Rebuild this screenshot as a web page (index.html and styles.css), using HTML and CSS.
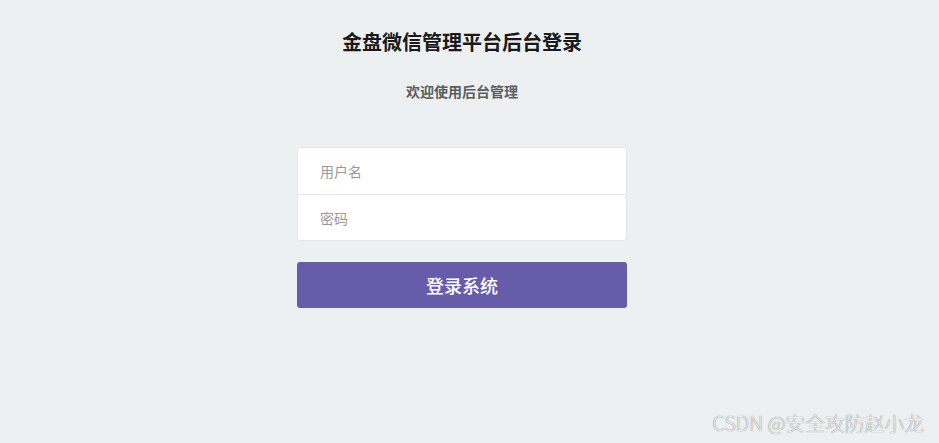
FILE: index.html
```html
<!DOCTYPE html>
<html lang="zh">
<head>
<meta charset="utf-8">
<title>金盘微信管理平台后台登录</title>
<link rel="stylesheet" href="styles.css">
</head>
<body>
<div class="page">
  <div class="login">
    <h1 class="title">金盘微信管理平台后台登录</h1>
    <p class="subtitle">欢迎使用后台管理</p>
    <form class="form">
      <div class="fields">
        <input class="field" type="text" placeholder="用户名">
        <input class="field" type="password" placeholder="密码">
      </div>
      <button class="submit" type="button">登录系统</button>
    </form>
  </div>
</div>
<div class="watermark">CSDN @安全攻防赵小龙</div>
</body>
</html>
```
FILE: styles.css
```css
html, body {
  margin: 0;
  padding: 0;
  height: 100%;
  background: #edf0f1;
  font-family: "Noto Sans CJK SC", "Noto Sans", sans-serif;
}
.page {
  width: 924px;
  display: flex;
  justify-content: center;
}
.login {
  width: 330px;
  display: flex;
  flex-direction: column;
  align-items: center;
  padding-top: 28px;
}
.title {
  margin: 0;
  font-size: 20px;
  line-height: 28px;
  font-weight: 700;
  color: #1a1a1a;
}
.subtitle {
  margin: 25px 0 0;
  font-size: 14px;
  line-height: 20px;
  font-weight: 700;
  color: #5b5e60;
}
.form {
  margin-top: 46px;
  width: 330px;
  display: flex;
  flex-direction: column;
}
.fields {
  display: flex;
  flex-direction: column;
  background: #fff;
  border: 1px solid #e3e6e8;
  border-radius: 4px;
  overflow: hidden;
}
.field {
  height: 46px;
  border: none;
  padding: 0 22px;
  font-family: inherit;
  font-size: 14px;
  color: #333;
  background: #fff;
  outline: none;
  box-sizing: border-box;
}
.field + .field {
  border-top: 1px solid #e3e6e8;
}
.field::placeholder {
  color: #999;
}
.submit {
  margin-top: 21px;
  height: 46px;
  border: none;
  border-radius: 3px;
  background: #665ca9;
  color: #fff;
  font-family: inherit;
  font-size: 18px;
  font-weight: 500;
}
.watermark {
  position: absolute;
  right: 15px;
  bottom: 6px;
  font-size: 19.8px;
  font-weight: 300;
  color: #f0f0f0;
  text-shadow: 0 0 1px #555;
  font-family: "Noto Sans CJK SC", sans-serif;
}
```
